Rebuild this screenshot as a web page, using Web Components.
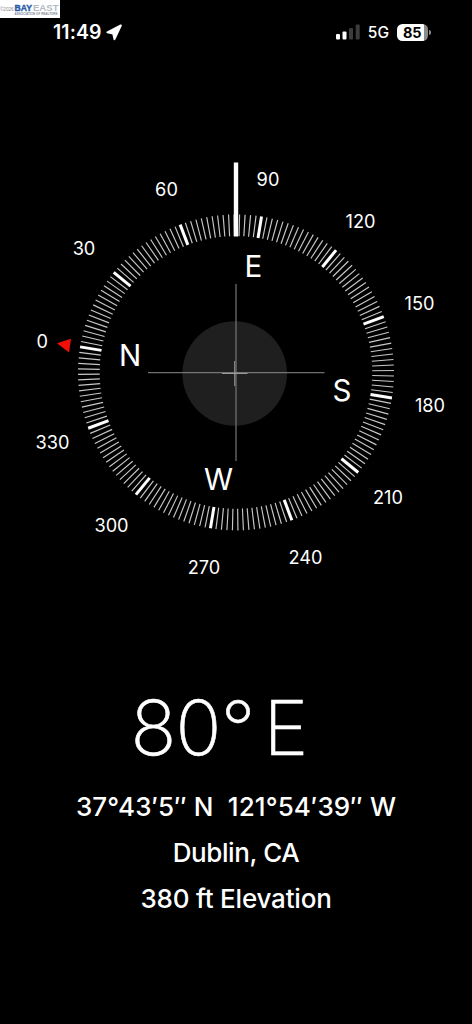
<!DOCTYPE html>
<html lang="en"><head><meta charset="utf-8"><title>Compass</title>
<style>html,body{margin:0;background:#000}body{width:472px;height:1024px;overflow:hidden;font-family:Inter,"Liberation Sans",sans-serif;color:#fff}</style></head>
<body>
<compass-app></compass-app>
<script>
const define=(name,html,setup)=>customElements.define(name,class extends HTMLElement{
  constructor(){super();const t=document.createElement('template');t.innerHTML=html;
    this.attachShadow({mode:'open'}).append(t.content.cloneNode(true));if(setup)setup(this);}
});

define('source-mark',`<style>
:host{position:absolute;left:0;top:0;width:60px;height:18px;background:#fff;overflow:hidden}
svg{display:block}</style>
<svg width="60" height="18" viewBox="0 0 60 18" font-family="'Liberation Sans',sans-serif">
<text x="0" y="11.2" font-size="5" fill="#888" textLength="13.5" lengthAdjust="spacingAndGlyphs">©2026</text>
<text x="14.5" y="11" font-size="9.4" font-weight="700" fill="#2a5ba6" stroke="#2a5ba6" stroke-width=".4" textLength="17.5" lengthAdjust="spacingAndGlyphs">BAY</text>
<text x="33" y="11" font-size="9.4" font-weight="700" fill="#b3b9c2" textLength="25.500" lengthAdjust="spacingAndGlyphs">EAST</text>
<text x="14.5" y="15" font-size="2.600" font-weight="700" fill="#7f889a" textLength="43" lengthAdjust="spacingAndGlyphs">ASSOCIATION OF REALTORS</text>
</svg>`);

define('battery-badge',`<style>
:host{display:flex;align-items:center}
.b{width:30.500px;height:17px;border-radius:5.5px;background:linear-gradient(90deg,#fff 86%,#8b8b8b 86%);color:#000;font:700 14.500px/17px Inter,sans-serif;text-align:center}
i{width:2px;height:5px;background:#8b8b8b;border-radius:0 2px 2px 0;margin-left:1px}
</style><span class="b"><slot></slot></span><i></i>`);

define('status-bar',`<style>
:host{display:flex;box-sizing:border-box;height:64px;padding:0 41.500px 0 53px;align-items:center;justify-content:space-between}
div{display:flex;align-items:center}
.t{font-weight:600;font-size:19.500px;letter-spacing:.1px}
.n{font-weight:500;font-size:15.500px;margin:1px 8px 0 6.500px}
svg{display:block}
</style><div><span class="t">11:49</span><svg style="margin-left:4.500px" width="17" height="17" viewBox="0 0 17 17"><path d="M14.800 1.500 1.400 8.300 7.200 9.600 8.500 15.200Z" fill="#fff" stroke="#fff" stroke-width="2" stroke-linejoin="round"/></svg></div>
<div><svg width="25" height="16" viewBox="0 0 25 16"><rect x="0" y="10" width="4" height="5.5" rx="1" fill="#fff"/><rect x="6.5" y="7.5" width="4" height="8" rx="1" fill="#fff"/><rect x="13" y="4" width="4" height="11.5" rx="1" fill="#3c3c3c"/><rect x="19.7" y="0.5" width="4" height="15" rx="1" fill="#3c3c3c"/></svg><span class="n">5G</span><battery-badge>85</battery-badge></div>`);

define('compass-dial',`<style>:host{display:block;height:616px}svg{display:block}</style>
<svg width="472" height="616" viewBox="0 64 472 616" font-family="Inter,'Liberation Sans',sans-serif" fill="#fff" text-anchor="middle">
<circle cx="234.7" cy="373.5" r="52.3" fill="#1f1f1f"/>
<g id="ticks"></g>
<path d="M236 284V461" stroke="#777" stroke-width="1.2"/><path d="M148 372.7H324.500" stroke="#8c8c8c" stroke-width="1"/>
<path d="M234.7 361V386M222 373.5H247.500" stroke="#999" stroke-width="1"/>
<rect x="233.800" y="162.500" width="4.400" height="74"/>
<path d="M57 343.2 71 338.7 69 352.400Z" fill="#f30e08"/>
<g id="labels"></g></svg>`,el=>{
  const east=9.3,cx=236,cy=372.4,root=el.shadowRoot,ns='http://www.w3.org/2000/svg';
  for(let d=0;d<360;d+=2){
    const a=(d-90+east)*Math.PI/180,s=Math.sin(a),c=-Math.cos(a),l=document.createElementNS(ns,'line'),major=d%30===0;
    for(const [k,v] of Object.entries({x1:cx+136.300*s,y1:cy+136.300*c,x2:cx+158*s,y2:cy+158*c,stroke:major?'#fff':'#c8c8c8','stroke-width':major?3:1.15}))l.setAttribute(k,v);
    root.getElementById('ticks').append(l);
  }
  const text=(s,x,y,size,w=400)=>{const t=document.createElementNS(ns,'text');t.textContent=s;t.setAttribute('x',x);t.setAttribute('y',y+size*.364);t.setAttribute('font-size',size);t.setAttribute('font-weight',w);root.getElementById('labels').append(t)};
  [['60',166.500,189],['90',268,179],['30',84,248.300],['120',360.500,221],['150',419.500,303.500],['0',42.300,341],['180',430,405],['330',52.500,442],['210',388,497.500],['300',111.500,525],['240',305.500,557],['270',204,567]].forEach(p=>text(...p,18.2));
  [['E',253.300,266.500],['N',130,355.500],['S',342,390],['W',218.500,479]].forEach(p=>text(...p,29.5));
});

define('compass-readout',`<style>
:host{display:flex;flex-direction:column;align-items:center}
.h{font-weight:200;font-size:76px;line-height:94px;margin-right:34px;white-space:pre;letter-spacing:-.8px;word-spacing:-11.500px;-webkit-text-stroke:.6px #fff}
.r{font-weight:500;font-size:26px;line-height:46px;white-space:pre}
.p{margin-top:10px;letter-spacing:.12px}
.c{letter-spacing:-.4px}
.e{letter-spacing:-.2px}
</style><div class="h"><slot name="heading"></slot></div><div class="r p"><slot name="position"></slot></div><div class="r c"><slot name="place"></slot></div><div class="r e"><slot name="elevation"></slot></div>`);

define('compass-app',`<style>:host{display:block;position:relative;width:472px;height:1024px;background:#000}</style>
<status-bar></status-bar><compass-dial></compass-dial>
<compass-readout><span slot="heading">80° E</span><span slot="position">37°43′5″ N  121°54′39″ W</span><span slot="place">Dublin, CA</span><span slot="elevation">380 ft Elevation</span></compass-readout>
<source-mark></source-mark>`);
</script></body></html>
